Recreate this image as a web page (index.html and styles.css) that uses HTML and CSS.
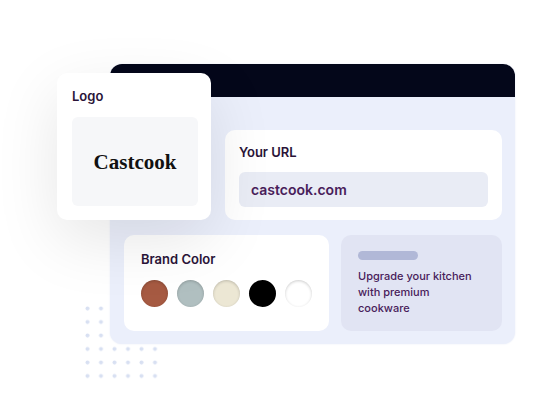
FILE: index.html
```html
<!DOCTYPE html>
<html lang="en">
<head>
<meta charset="utf-8">
<meta name="viewport" content="width=device-width, initial-scale=1">
<title>Castcook</title>
<link rel="stylesheet" href="styles.css">
</head>
<body>
<main class="stage">
  <div class="window">
    <svg class="dots" width="76" height="76" aria-hidden="true">
      <defs>
        <pattern id="dot" width="13.5" height="13.5" patternUnits="userSpaceOnUse">
          <circle cx="2.5" cy="2.5" r="2" fill="#d8e0f2"/>
        </pattern>
      </defs>
      <rect width="76" height="76" fill="url(#dot)"/>
    </svg>
    <div class="panel">
      <header class="bar"></header>
      <div class="content">
        <form class="card url">
          <label class="title" for="url">Your URL</label>
          <input class="field" id="url" type="text" value="castcook.com">
        </form>
        <div class="row">
          <section class="card brand">
            <h2 class="title">Brand Color</h2>
            <div class="swatches">
              <button type="button" class="swatch rust" aria-label="Rust"></button>
              <button type="button" class="swatch sage" aria-label="Sage"></button>
              <button type="button" class="swatch cream" aria-label="Cream"></button>
              <button type="button" class="swatch black" aria-label="Black"></button>
              <button type="button" class="swatch white" aria-label="White"></button>
            </div>
          </section>
          <section class="card promo">
            <div class="pill"></div>
            <p class="copy">Upgrade your kitchen with premium cookware</p>
          </section>
        </div>
      </div>
    </div>
    <section class="logo-card">
      <h2 class="title">Logo</h2>
      <div class="logo">Castcook</div>
    </section>
  </div>
</main>
</body>
</html>
```
FILE: styles.css
```css
* {
  box-sizing: border-box;
}

body {
  margin: 0;
  background: #fff;
  color: #2a1438;
  font-family: Inter, "Liberation Sans", sans-serif;
}

h2,
p {
  margin: 0;
}

.stage {
  padding: 64px 40px 64px 110px;
}

.window {
  position: relative;
}

.dots {
  position: absolute;
  left: -25px;
  bottom: -38px;
}

.panel {
  position: relative;
  overflow: hidden;
  border-radius: 12px;
  background: #ebeffb;
  box-shadow: 0 0 2px #e6eaf6;
}

.bar {
  height: 33px;
  background: #04071a;
}

.content {
  display: flex;
  flex-direction: column;
  gap: 15px;
  padding: 33px 13px 13px 14px;
}

.row {
  display: flex;
  gap: 12px;
}

.card {
  border-radius: 10px;
  background: #fff;
}

.title {
  font-size: 13px;
  font-weight: 600;
  line-height: 16px;
}

.url {
  display: flex;
  flex-direction: column;
  gap: 12px;
  margin-left: 101px;
  padding: 14px 14px 13px;
}

.field {
  width: 100%;
  height: 35px;
  padding: 0 12px;
  border: 0;
  border-radius: 6px;
  background: #e9ecf5;
  color: #48205a;
  font: 600 14px/20px Inter, "Liberation Sans", sans-serif;
}

.brand {
  flex: 5;
  padding: 16px 17px 24px;
}

.swatches {
  display: flex;
  gap: 9px;
  margin-top: 13px;
}

.swatch {
  width: 27px;
  height: 27px;
  padding: 0;
  border: 0;
  border-radius: 50%;
  box-shadow: inset 0 1px 3px rgba(0, 0, 0, 0.2);
}

.rust {
  background: #a65a42;
}

.sage {
  background: #b0bfc0;
}

.cream {
  background: #ece7d4;
}

.black {
  background: #000;
}

.white {
  background: #fff;
}

.promo {
  flex: 4;
  padding: 16px 16px 15px 17px;
  background: #e1e4f3;
}

.pill {
  width: 60px;
  height: 9px;
  border-radius: 5px;
  background: #b1b8d7;
}

.copy {
  margin-top: 8px;
  max-width: 120px;
  color: #48205a;
  font-size: 11px;
  font-weight: 500;
  line-height: 16px;
}

.logo-card {
  position: absolute;
  top: 9px;
  left: -53px;
  width: 154px;
  padding: 15px 13px 14px 15px;
  border-radius: 10px;
  background: #fff;
  box-shadow: 0 20px 64px rgba(0, 0, 0, 0.1);
}

.logo {
  display: flex;
  align-items: center;
  justify-content: center;
  height: 89px;
  margin-top: 13px;
  border-radius: 6px;
  background: #f6f7f9;
  color: #111;
  font: bold 21px/24px "Liberation Serif", serif;
}
```
